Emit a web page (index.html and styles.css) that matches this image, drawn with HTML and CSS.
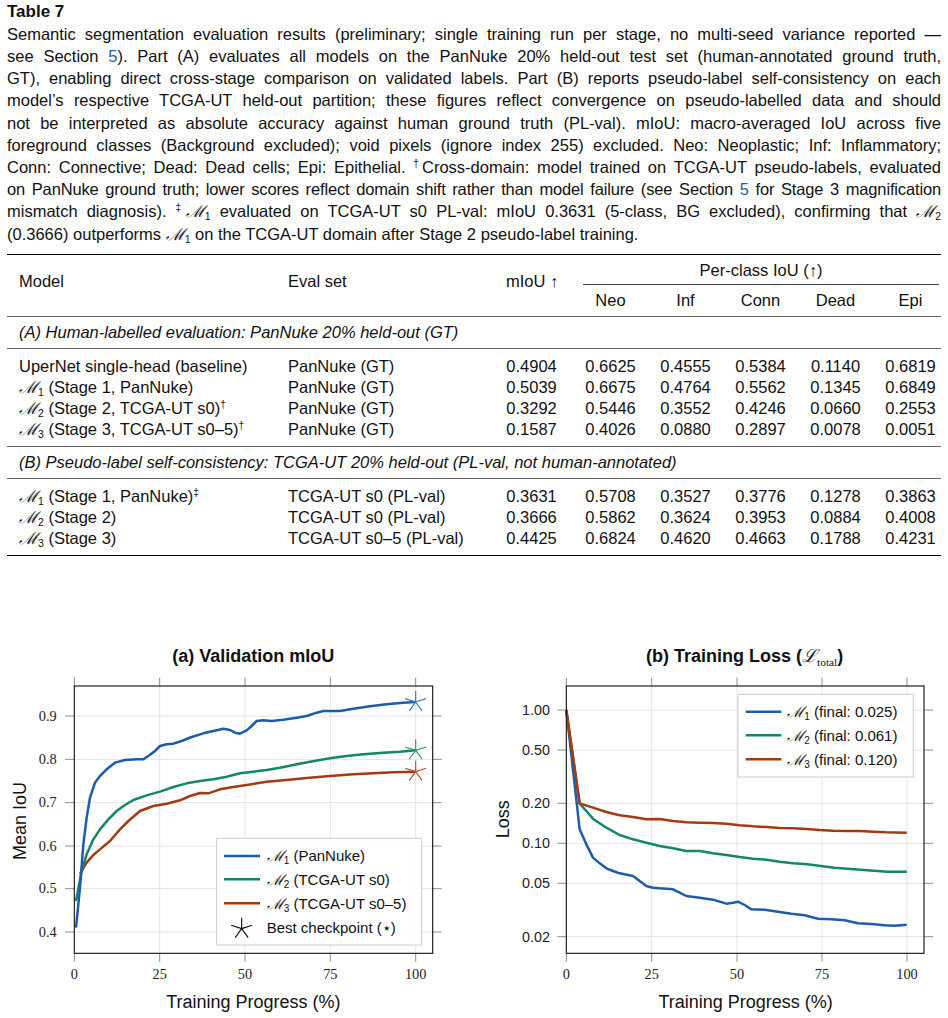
FILE: index.html
```html
<!DOCTYPE html>
<html lang="en">
<head>
<meta charset="utf-8">
<title>Table 7</title>
<link rel="stylesheet" href="styles.css">
</head>
<body>
<div class="doc">
  <div class="table-title">Table 7</div>
  <p class="caption">
    <span class="ln">Semantic segmentation evaluation results (preliminary; single training run per stage, no multi-seed variance reported —</span>
    <span class="ln">see Section <span class="ref">5</span>). Part (A) evaluates all models on the PanNuke 20% held-out test set (human-annotated ground truth,</span>
    <span class="ln">GT), enabling direct cross-stage comparison on validated labels. Part (B) reports pseudo-label self-consistency on each</span>
    <span class="ln">model’s respective TCGA-UT held-out partition; these figures reflect convergence on pseudo-labelled data and should</span>
    <span class="ln">not be interpreted as absolute accuracy against human ground truth (PL-val). mIoU: macro-averaged IoU across five</span>
    <span class="ln">foreground classes (Background excluded); void pixels (ignore index 255) excluded. Neo: Neoplastic; Inf: Inflammatory;</span>
    <span class="ln">Conn: Connective; Dead: Dead cells; Epi: Epithelial. <sup class="fn">†</sup>Cross-domain: model trained on TCGA-UT pseudo-labels, evaluated</span>
    <span class="ln tight">on PanNuke ground truth; lower scores reflect domain shift rather than model failure (see Section <span class="ref">5</span> for Stage 3 magnification</span>
    <span class="ln">mismatch diagnosis). <sup class="fn">‡</sup><span class="cal">ℳ</span><sub class="idx">1</sub> evaluated on TCGA-UT s0 PL-val: mIoU 0.3631 (5-class, BG excluded), confirming that <span class="cal">ℳ</span><sub class="idx">2</sub></span>
    <span class="ln last">(0.3666) outperforms <span class="cal">ℳ</span><sub class="idx">1</sub> on the TCGA-UT domain after Stage 2 pseudo-label training.</span>
  </p>

  <table class="results">
    <colgroup>
      <col class="w-model"><col class="w-eval"><col class="w-miou"><col class="w-neo"><col class="w-cls"><col class="w-cls"><col class="w-cls"><col class="w-cls">
    </colgroup>
    <thead>
      <tr class="hrow1">
        <th rowspan="2" class="c-model hmid">Model</th>
        <th rowspan="2" class="c-eval hmid">Eval set</th>
        <th rowspan="2" class="c-num c-miou hmid">mIoU ↑</th>
        <th colspan="5" class="c-group"><div class="group-label">Per-class IoU (↑)</div></th>
      </tr>
      <tr class="hrow2">
        <th class="c-num c-neo">Neo</th>
        <th class="c-num">Inf</th>
        <th class="c-num">Conn</th>
        <th class="c-num">Dead</th>
        <th class="c-num">Epi</th>
      </tr>
    </thead>
    <tbody class="sec">
      <tr><td colspan="8" class="sec-label">(A) Human-labelled evaluation: PanNuke 20% held-out (GT)</td></tr>
    </tbody>
    <tbody class="data">
      <tr><td class="c-model">UperNet single-head (baseline)</td><td class="c-eval">PanNuke (GT)</td><td class="c-num c-miou">0.4904</td><td class="c-num c-neo">0.6625</td><td class="c-num">0.4555</td><td class="c-num">0.5384</td><td class="c-num">0.1140</td><td class="c-num">0.6819</td></tr>
      <tr><td class="c-model"><span class="cal">ℳ</span><sub class="idx">1</sub> (Stage 1, PanNuke)</td><td class="c-eval">PanNuke (GT)</td><td class="c-num c-miou">0.5039</td><td class="c-num c-neo">0.6675</td><td class="c-num">0.4764</td><td class="c-num">0.5562</td><td class="c-num">0.1345</td><td class="c-num">0.6849</td></tr>
      <tr><td class="c-model"><span class="cal">ℳ</span><sub class="idx">2</sub> (Stage 2, TCGA-UT s0)<sup class="fn">†</sup></td><td class="c-eval">PanNuke (GT)</td><td class="c-num c-miou">0.3292</td><td class="c-num c-neo">0.5446</td><td class="c-num">0.3552</td><td class="c-num">0.4246</td><td class="c-num">0.0660</td><td class="c-num">0.2553</td></tr>
      <tr><td class="c-model"><span class="cal">ℳ</span><sub class="idx">3</sub> (Stage 3, TCGA-UT s0–5)<sup class="fn">†</sup></td><td class="c-eval">PanNuke (GT)</td><td class="c-num c-miou">0.1587</td><td class="c-num c-neo">0.4026</td><td class="c-num">0.0880</td><td class="c-num">0.2897</td><td class="c-num">0.0078</td><td class="c-num">0.0051</td></tr>
    </tbody>
    <tbody class="sec">
      <tr><td colspan="8" class="sec-label">(B) Pseudo-label self-consistency: TCGA-UT 20% held-out (PL-val, not human-annotated)</td></tr>
    </tbody>
    <tbody class="data last">
      <tr><td class="c-model"><span class="cal">ℳ</span><sub class="idx">1</sub> (Stage 1, PanNuke)<sup class="fn">‡</sup></td><td class="c-eval">TCGA-UT s0 (PL-val)</td><td class="c-num c-miou">0.3631</td><td class="c-num c-neo">0.5708</td><td class="c-num">0.3527</td><td class="c-num">0.3776</td><td class="c-num">0.1278</td><td class="c-num">0.3863</td></tr>
      <tr><td class="c-model"><span class="cal">ℳ</span><sub class="idx">2</sub> (Stage 2)</td><td class="c-eval">TCGA-UT s0 (PL-val)</td><td class="c-num c-miou">0.3666</td><td class="c-num c-neo">0.5862</td><td class="c-num">0.3624</td><td class="c-num">0.3953</td><td class="c-num">0.0884</td><td class="c-num">0.4008</td></tr>
      <tr><td class="c-model"><span class="cal">ℳ</span><sub class="idx">3</sub> (Stage 3)</td><td class="c-eval">TCGA-UT s0–5 (PL-val)</td><td class="c-num c-miou">0.4425</td><td class="c-num c-neo">0.6824</td><td class="c-num">0.4620</td><td class="c-num">0.4663</td><td class="c-num">0.1788</td><td class="c-num">0.4231</td></tr>
    </tbody>
  </table>
</div>

<div class="figures">
  <svg class="plot" viewBox="0 0 1422 1164" width="474" height="388">
    <text class="ptitle" x="760" y="94" text-anchor="middle">(a) Validation mIoU</text>
    <g class="grid">
      <path d="M479 165V967M735 165V967M991 165V967M1247 165V967M223 255H1298M223 385H1298M223 515H1298M223 645H1298M223 773H1298M223 903H1298"/>
    </g>
    <g class="ticks">
      <path d="M223 140V165M479 140V165M735 140V165M991 140V165M1247 140V165M223 967V992M479 967V992M735 967V992M991 967V992M1247 967V992"/>
      <path d="M195 255H223M195 385H223M195 515H223M195 645H223M195 773H223M195 903H223M1298 255H1325M1298 385H1325M1298 515H1325M1298 645H1325M1298 773H1325M1298 903H1325"/>
    </g>
    <g class="tk" text-anchor="end">
      <text x="170" y="269">0.9</text>
      <text x="170" y="399">0.8</text>
      <text x="170" y="529">0.7</text>
      <text x="170" y="659">0.6</text>
      <text x="170" y="787">0.5</text>
      <text x="170" y="917">0.4</text>
    </g>
    <g class="tk" text-anchor="middle">
      <text x="223" y="1045">0</text>
      <text x="479" y="1045">25</text>
      <text x="735" y="1045">50</text>
      <text x="991" y="1045">75</text>
      <text x="1247" y="1045">100</text>
    </g>
    <polyline class="ln-red" points="240,728 260,695 280,672 300,655 330,630 360,595 385,570 420,540 460,525 500,518 540,508 570,495 600,486 625,487 660,475 700,468 740,462 800,452 860,447 920,441 990,435 1060,430 1120,427 1180,424 1247,422"/>
    <polyline class="ln-green" points="228,810 245,720 260,670 280,625 300,595 325,565 350,540 375,522 400,507 440,493 480,482 520,468 560,457 600,450 640,445 680,437 720,427 760,422 800,417 840,410 880,402 930,392 990,382 1040,375 1090,370 1150,365 1200,362 1247,358"/>
    <polyline class="ln-blue" points="228,890 240,770 250,640 260,560 270,500 285,455 300,435 320,415 345,395 375,387 410,385 430,385 445,375 465,360 480,345 500,340 520,338 545,330 575,318 610,307 640,300 670,293 690,297 705,305 720,308 740,298 755,285 770,270 790,268 815,270 850,266 890,260 920,255 950,245 970,240 1020,240 1060,233 1110,226 1160,220 1210,215 1247,213"/>
    <path class="star st-blue" d="M1247 213l0 -33M1247 213l-31.4 -10.2M1247 213l31.4 -10.2M1247 213l-19.4 26.7M1247 213l19.4 26.7"/>
    <path class="star st-green" d="M1247 358l0 -33M1247 358l-31.4 -10.2M1247 358l31.4 -10.2M1247 358l-19.4 26.7M1247 358l19.4 26.7"/>
    <path class="star st-red" d="M1247 422l0 -33M1247 422l-31.4 -10.2M1247 422l31.4 -10.2M1247 422l-19.4 26.7M1247 422l19.4 26.7"/>
    <rect class="frame" x="223" y="165" width="1075" height="802"/>
    <rect class="legend" x="650" y="622" width="615" height="320"/>
    <line class="ln-blue" x1="672" y1="675" x2="780" y2="675"/>
    <line class="ln-green" x1="672" y1="745" x2="780" y2="745"/>
    <line class="ln-red" x1="672" y1="817" x2="780" y2="817"/>
    <path class="star st-black" d="M725 893l0 -33M725 893l-31.4 -10.2M725 893l31.4 -10.2M725 893l-19.4 26.7M725 893l19.4 26.7"/>
    <g class="lg">
      <text x="800" y="691"><tspan class="cal">ℳ</tspan><tspan class="sb" dy="9">1</tspan><tspan dy="-9">&#160;(PanNuke)</tspan></text>
      <text x="800" y="761"><tspan class="cal">ℳ</tspan><tspan class="sb" dy="9">2</tspan><tspan dy="-9">&#160;(TCGA-UT s0)</tspan></text>
      <text x="800" y="833"><tspan class="cal">ℳ</tspan><tspan class="sb" dy="9">3</tspan><tspan dy="-9">&#160;(TCGA-UT s0–5)</tspan></text>
      <text x="800" y="906">Best checkpoint (⋆)</text>
    </g>
    <text class="axl" transform="translate(79,570) rotate(-90)" text-anchor="middle">Mean IoU</text>
    <text class="axl" x="760" y="1131" text-anchor="middle">Training Progress (%)</text>
  </svg>

  <svg class="plot" viewBox="0 0 1422 1164" width="474" height="388">
    <text class="ptitle" x="812" y="94" text-anchor="middle">(b) Training Loss (<tspan class="calb">ℒ</tspan><tspan class="sbr" dy="10">total</tspan><tspan dy="-10">)</tspan></text>
    <g class="grid">
      <path d="M533 165V967M789 165V967M1044 165V967M1299 165V967M277 237H1350M277 357H1350M277 517H1350M277 637H1350M277 757H1350M277 917H1350"/>
    </g>
    <g class="ticks">
      <path d="M277 140V165M533 140V165M789 140V165M1044 140V165M1299 140V165M277 967V992M533 967V992M789 967V992M1044 967V992M1299 967V992"/>
      <path d="M250 237H277M250 357H277M250 517H277M250 637H277M250 757H277M250 917H277M1350 237H1377M1350 357H1377M1350 517H1377M1350 637H1377M1350 757H1377M1350 917H1377"/>
    </g>
    <g class="tks" text-anchor="end">
      <text x="228" y="252">1.00</text>
      <text x="228" y="372">0.50</text>
      <text x="228" y="532">0.20</text>
      <text x="228" y="652">0.10</text>
      <text x="228" y="772">0.05</text>
      <text x="228" y="932">0.02</text>
    </g>
    <g class="tk" text-anchor="middle">
      <text x="277" y="1045">0</text>
      <text x="533" y="1045">25</text>
      <text x="789" y="1045">50</text>
      <text x="1044" y="1045">75</text>
      <text x="1299" y="1045">100</text>
    </g>
    <polyline class="ln-blue" points="277,237 317,595 337,640 357,680 377,697 397,712 417,720 437,727 477,735 497,750 517,765 537,770 557,772 597,775 617,785 637,795 677,800 717,806 757,818 777,815 792,812 812,822 832,835 872,836 912,842 952,848 992,853 1032,863 1072,865 1112,868 1152,877 1192,879 1232,883 1262,884 1298,881"/>
    <polyline class="ln-green" points="277,240 317,518 337,540 357,563 397,590 437,612 477,625 517,635 557,645 597,652 637,660 677,660 717,667 757,672 797,678 837,683 877,686 917,692 957,697 1000,700 1040,705 1080,710 1120,713 1160,716 1200,719 1240,722 1298,722"/>
    <polyline class="ln-red" points="277,237 317,517 357,530 397,543 437,553 477,558 517,565 557,564 597,570 637,574 677,575 717,576 757,578 797,583 837,586 877,588 917,591 957,592 997,594 1037,597 1077,599 1117,600 1157,600 1197,602 1237,604 1298,605"/>
    <rect class="frame" x="277" y="165" width="1073" height="802"/>
    <rect class="legend" x="792" y="190" width="526" height="248"/>
    <line class="ln-blue" x1="815" y1="242" x2="922" y2="242"/>
    <line class="ln-green" x1="815" y1="313" x2="922" y2="313"/>
    <line class="ln-red" x1="815" y1="385" x2="922" y2="385"/>
    <g class="lg">
      <text x="940" y="258"><tspan class="cal">ℳ</tspan><tspan class="sb" dy="9">1</tspan><tspan dy="-9">&#160;(final: 0.025)</tspan></text>
      <text x="940" y="329"><tspan class="cal">ℳ</tspan><tspan class="sb" dy="9">2</tspan><tspan dy="-9">&#160;(final: 0.061)</tspan></text>
      <text x="940" y="401"><tspan class="cal">ℳ</tspan><tspan class="sb" dy="9">3</tspan><tspan dy="-9">&#160;(final: 0.120)</tspan></text>
    </g>
    <text class="axl" transform="translate(104,565) rotate(-90)" text-anchor="middle">Loss</text>
    <text class="axl" x="815" y="1131" text-anchor="middle">Training Progress (%)</text>
  </svg>
</div>
</body>
</html>
```

FILE: styles.css
```css
* { box-sizing: border-box; }

body {
  margin: 0;
  padding: 1px 0 0;
  background: #fff;
  color: #111;
  font-family: "Liberation Sans", Arial, sans-serif;
}

.doc { padding: 0 7px; }

.table-title {
  font-weight: bold;
  font-size: 17px;
  line-height: 22px;
}

.caption {
  margin: 0;
  font-size: 16.5px;
  line-height: 22.15px;
}

.caption .ln {
  display: block;
  text-align: justify;
  text-align-last: justify;
}

.caption .ln.tight { letter-spacing: -0.15px; word-spacing: -1px; }
.caption .ln.last { text-align-last: left; }

.ref { color: #2d5b9c; }

.fn {
  font-size: 10px;
  line-height: 0;
  vertical-align: 6px;
}

.cal {
  font-family: "DejaVu Serif", serif;
  font-style: italic;
}

.idx {
  font-size: 10.5px;
  line-height: 0;
  vertical-align: -3px;
}

/* table */
.results {
  width: 934px;
  margin-top: 7px;
  border-collapse: collapse;
  table-layout: fixed;
  font-size: 16.5px;
  line-height: 21px;
}

.w-model { width: 281px; }
.w-eval { width: 212px; }
.w-miou { width: 62px; }
.w-neo { width: 79px; }
.w-cls { width: 75px; }

.results thead { border-top: 1.5px solid #000; border-bottom: 1px solid #666; }
.results tbody.sec { border-bottom: 1px solid #666; }
.results tbody.data { border-bottom: 1px solid #666; }
.results tbody.data.last { border-bottom: 1.5px solid #000; }

.results th { font-weight: normal; }
.results th, .results td { padding: 0; white-space: nowrap; }

.c-model { text-align: left; padding-left: 12px !important; }
.c-eval { text-align: left; }
.c-num { text-align: center; padding: 0 5px 0 19px !important; }
.c-miou { padding-left: 6px !important; }
.c-neo { padding-left: 23px !important; }

.hmid { vertical-align: middle; padding-bottom: 7px !important; }

.hrow1 .c-group {
  vertical-align: bottom;
  padding: 5px 2px 0 21px;
}
.group-label {
  text-align: center;
  padding-bottom: 3px;
  border-bottom: 1px solid #444;
}

.hrow2 th { padding-top: 5px !important; padding-bottom: 5px !important; }

.sec-label {
  font-style: italic;
  padding: 5px 0 5px 12px !important;
}

.data tr:first-child td { padding-top: 7px !important; }
.data tr:last-child td { padding-bottom: 6px !important; }

/* figures */
.figures {
  display: flex;
  margin-top: 75px;
}

.plot {
  display: block;
  width: 474px;
  height: 388px;
}

.grid path { stroke: #e4e4e4; stroke-width: 3; fill: none; }
.ticks path { stroke: #8f8f8f; stroke-width: 3; fill: none; }
.frame { fill: none; stroke: #1a1a1a; stroke-width: 3.5; }
.legend { fill: #fff; fill-opacity: 0.92; stroke: #cfcfcf; stroke-width: 3; }

.ln-blue, .ln-green, .ln-red { fill: none; stroke-width: 7.5; stroke-linejoin: round; }
.ln-blue { stroke: #1d5caa; }
.ln-green { stroke: #138767; }
.ln-red { stroke: #a43a12; }

.star { fill: none; stroke-width: 3.5; }
.st-blue { stroke: #3d78c2; }
.st-green { stroke: #2a9a7b; }
.st-red { stroke: #b8542c; }
.st-black { stroke: #111; }

.ptitle { font-family: "Liberation Sans", Arial, sans-serif; font-weight: bold; font-size: 54px; fill: #111; }
.tk { font-family: "Liberation Serif", "Times New Roman", serif; font-size: 43px; fill: #222; }
.tks { font-family: "Liberation Sans", Arial, sans-serif; font-size: 43px; fill: #222; }
.axl { font-family: "Liberation Sans", Arial, sans-serif; font-size: 54px; fill: #111; }
.lg { font-family: "Liberation Sans", Arial, sans-serif; font-size: 45px; fill: #111; }
.lg .cal { font-family: "DejaVu Serif", serif; font-style: italic; }
.sb { font-size: 30px; }
.calb { font-family: "DejaVu Serif", serif; font-style: italic; font-weight: normal; }
.sbr { font-family: "Liberation Serif", serif; font-weight: normal; font-size: 34px; }
```
